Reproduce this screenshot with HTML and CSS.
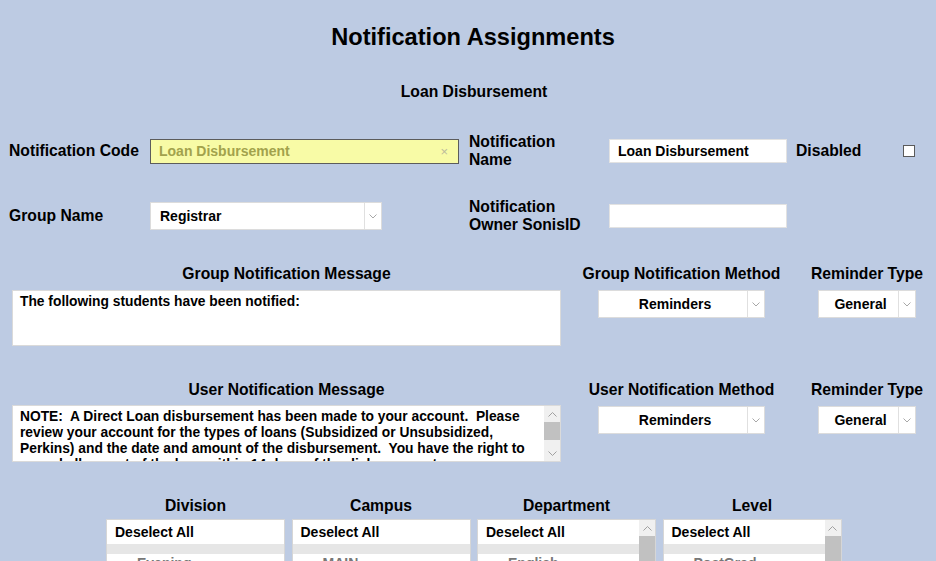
FILE: index.html
```html
<!DOCTYPE html>
<html>
<head>
<meta charset="utf-8">
<title>Notification Assignments</title>
<link rel="stylesheet" href="styles.css">
</head>
<body>
<div class="page">
  <h1 class="title">Notification Assignments</h1>
  <div class="subtitle">Loan Disbursement</div>

  <div class="form-grid">
    <div class="label">Notification Code</div>
    <div class="code-input">
      <span class="code-text">Loan Disbursement</span>
      <span class="clear">&#215;</span>
    </div>
    <div class="label">Notification<br>Name</div>
    <div class="text-input name-input">Loan Disbursement</div>
    <div class="label">Disabled</div>
    <div class="checkbox"></div>

    <div class="label">Group Name</div>
    <div class="select group-select">
      <span class="select-text">Registrar</span>
      <span class="select-arrow"><svg width="8" height="5" viewBox="0 0 8 5"><polyline points="0.5,0.5 4,4 7.5,0.5" fill="none" stroke="#a8a8a8" stroke-width="1"/></svg></span>
    </div>
    <div class="label">Notification<br>Owner SonisID</div>
    <div class="text-input name-input"></div>
    <div></div>
    <div></div>
  </div>

  <div class="msg-row">
    <div class="col">
      <div class="heading">Group Notification Message</div>
      <div class="textarea group-text">
        <div class="textarea-body">The following students have been notified:</div>
      </div>
    </div>
    <div class="col">
      <div class="heading">Group Notification Method</div>
      <div class="select method-select center-select">
        <span class="select-text">Reminders</span>
        <span class="select-arrow"><svg width="8" height="5" viewBox="0 0 8 5"><polyline points="0.5,0.5 4,4 7.5,0.5" fill="none" stroke="#a8a8a8" stroke-width="1"/></svg></span>
      </div>
    </div>
    <div class="col">
      <div class="heading">Reminder Type</div>
      <div class="select type-select center-select">
        <span class="select-text">General</span>
        <span class="select-arrow"><svg width="8" height="5" viewBox="0 0 8 5"><polyline points="0.5,0.5 4,4 7.5,0.5" fill="none" stroke="#a8a8a8" stroke-width="1"/></svg></span>
      </div>
    </div>
  </div>

  <div class="msg-row user-row">
    <div class="col">
      <div class="heading">User Notification Message</div>
      <div class="textarea user-text">
        <div class="textarea-body">NOTE:  A Direct Loan disbursement has been made to your account.  Please
review your account for the types of loans (Subsidized or Unsubsidized,
Perkins) and the date and amount of the disbursement.  You have the right to
cancel all or part of the loan within 14 days of the disbursement or</div>
        <div class="scrollbar">
          <div class="sb-btn"><svg width="9" height="5" viewBox="0 0 9 5"><polyline points="0.5,4.5 4.5,0.5 8.5,4.5" fill="none" stroke="#a0a0a0" stroke-width="1"/></svg></div>
          <div class="sb-thumb"></div>
          <div class="sb-track"></div>
          <div class="sb-btn"><svg width="9" height="5" viewBox="0 0 9 5"><polyline points="0.5,0.5 4.5,4.5 8.5,0.5" fill="none" stroke="#a0a0a0" stroke-width="1"/></svg></div>
        </div>
      </div>
    </div>
    <div class="col">
      <div class="heading">User Notification Method</div>
      <div class="select method-select center-select">
        <span class="select-text">Reminders</span>
        <span class="select-arrow"><svg width="8" height="5" viewBox="0 0 8 5"><polyline points="0.5,0.5 4,4 7.5,0.5" fill="none" stroke="#a8a8a8" stroke-width="1"/></svg></span>
      </div>
    </div>
    <div class="col">
      <div class="heading">Reminder Type</div>
      <div class="select type-select center-select">
        <span class="select-text">General</span>
        <span class="select-arrow"><svg width="8" height="5" viewBox="0 0 8 5"><polyline points="0.5,0.5 4,4 7.5,0.5" fill="none" stroke="#a8a8a8" stroke-width="1"/></svg></span>
      </div>
    </div>
  </div>

  <div class="lists">
    <div class="list-col">
      <div class="heading">Division</div>
      <div class="listbox">
        <div class="list-items">
          <div class="item-all">Deselect All</div>
          <div class="item-sep"></div>
          <div class="item">Evening</div>
        </div>
      </div>
    </div>
    <div class="list-col">
      <div class="heading">Campus</div>
      <div class="listbox">
        <div class="list-items">
          <div class="item-all">Deselect All</div>
          <div class="item-sep"></div>
          <div class="item">MAIN</div>
        </div>
      </div>
    </div>
    <div class="list-col">
      <div class="heading">Department</div>
      <div class="listbox">
        <div class="list-items">
          <div class="item-all">Deselect All</div>
          <div class="item-sep"></div>
          <div class="item">English</div>
        </div>
        <div class="scrollbar">
          <div class="sb-btn"><svg width="9" height="5" viewBox="0 0 9 5"><polyline points="0.5,4.5 4.5,0.5 8.5,4.5" fill="none" stroke="#a0a0a0" stroke-width="1"/></svg></div>
          <div class="sb-thumb long"></div>
        </div>
      </div>
    </div>
    <div class="list-col">
      <div class="heading">Level</div>
      <div class="listbox">
        <div class="list-items">
          <div class="item-all">Deselect All</div>
          <div class="item-sep"></div>
          <div class="item">PostGrad</div>
        </div>
        <div class="scrollbar">
          <div class="sb-btn"><svg width="9" height="5" viewBox="0 0 9 5"><polyline points="0.5,4.5 4.5,0.5 8.5,4.5" fill="none" stroke="#a0a0a0" stroke-width="1"/></svg></div>
          <div class="sb-thumb long"></div>
        </div>
      </div>
    </div>
  </div>
</div>
</body>
</html>
```

FILE: styles.css
```css
html, body {
  margin: 0;
  padding: 0;
  overflow: hidden;
}

body {
  background: #bdcbe3;
  font-family: "Liberation Sans", Arial, sans-serif;
  color: #000;
}

.page {
  width: 936px;
  height: 561px;
  overflow: hidden;
  padding-top: 23px;
  box-sizing: border-box;
}

.title {
  margin: 0;
  font-size: 23.6px;
  line-height: 28px;
  font-weight: bold;
  text-align: center;
  padding-left: 10px;
}

.subtitle {
  margin-top: 31px;
  font-size: 15.7px;
  line-height: 20px;
  font-weight: bold;
  text-align: center;
  padding-left: 12px;
}

.form-grid {
  margin-top: 31px;
  padding-left: 9px;
  display: grid;
  grid-template-columns: 141px 319px 140px 187px 107px 13px;
  grid-auto-rows: 36px;
  row-gap: 29px;
  align-items: center;
}

.label {
  font-size: 15.7px;
  line-height: 18px;
  font-weight: bold;
}

.code-input {
  width: 309px;
  height: 25px;
  box-sizing: border-box;
  background: #f8fba6;
  border: 1px solid #5c5c5c;
  display: flex;
  align-items: center;
  justify-content: space-between;
  padding: 0 10px 0 8px;
}

.code-text {
  font-size: 14px;
  font-weight: bold;
  color: #a2a24c;
}

.clear {
  font-size: 13px;
  color: #bcbc9c;
}

.text-input {
  height: 24px;
  box-sizing: border-box;
  background: #fff;
  border: 1px solid #e2e2e2;
  font-size: 14px;
  font-weight: bold;
  line-height: 22px;
  padding-left: 8px;
}

.name-input {
  width: 178px;
}

.checkbox {
  width: 12px;
  height: 12px;
  box-sizing: border-box;
  background: #fff;
  border: 1px solid #5a5a5a;
  margin-top: -1px;
}

.select {
  height: 28px;
  box-sizing: border-box;
  background: #fff;
  border: 1px solid #dcdcdc;
  display: flex;
  align-items: stretch;
  font-size: 14px;
  font-weight: bold;
}

.select-text {
  flex: 1;
  display: flex;
  align-items: center;
  padding-left: 9px;
}

.center-select .select-text {
  justify-content: center;
  padding-left: 4px;
}

.select-arrow {
  width: 16px;
  border-left: 1px solid #e0e0e0;
  display: flex;
  align-items: center;
  justify-content: center;
}

.group-select {
  width: 232px;
}

.msg-row {
  margin-top: 30px;
  padding-left: 12px;
  display: grid;
  grid-template-columns: 549px 241px 130px;
}

.user-row {
  margin-top: 34px;
}

.col {
  display: flex;
  flex-direction: column;
  align-items: center;
}

.heading {
  font-size: 15.7px;
  line-height: 20px;
  font-weight: bold;
  text-align: center;
}

.col .select {
  margin-top: 6px;
}

.method-select {
  width: 167px;
}

.type-select {
  width: 98px;
}

.textarea {
  margin-top: 6px;
  width: 549px;
  box-sizing: border-box;
  background: #fff;
  border: 1px solid #dadada;
  display: flex;
  overflow: hidden;
}

.user-row .textarea {
  margin-top: 5px;
}

.group-text {
  height: 56px;
}

.user-text {
  height: 57px;
}

.textarea-body {
  flex: 1;
  padding: 3px 7px;
  font-size: 13.8px;
  line-height: 16px;
  font-weight: bold;
  white-space: pre;
  overflow: hidden;
}

.scrollbar {
  width: 16px;
  background: #f0f0f0;
  display: flex;
  flex-direction: column;
}

.sb-btn {
  height: 16px;
  flex: none;
  display: flex;
  align-items: center;
  justify-content: center;
}

.sb-thumb {
  height: 18px;
  background: #c1c1c1;
  flex: none;
}

.sb-thumb.long {
  height: 60px;
}

.sb-track {
  flex: 1;
}

.lists {
  margin-top: 34px;
  padding-left: 106px;
  display: grid;
  grid-template-columns: repeat(4, 179px);
  column-gap: 6.5px;
}

.list-col {
  display: flex;
  flex-direction: column;
}

.listbox {
  margin-top: 3px;
  height: 90px;
  box-sizing: border-box;
  background: #fff;
  border: 1px solid #d6d6d6;
  display: flex;
  overflow: hidden;
}

.list-items {
  flex: 1;
}

.item-all {
  height: 24px;
  line-height: 24px;
  padding-left: 8px;
  font-size: 14px;
  font-weight: bold;
}

.item-sep {
  height: 10px;
  background: #e6e6e6;
}

.item {
  line-height: 20px;
  padding-left: 30px;
  font-size: 14px;
  font-weight: bold;
  color: #777;
  margin-top: -1px;
}
```
